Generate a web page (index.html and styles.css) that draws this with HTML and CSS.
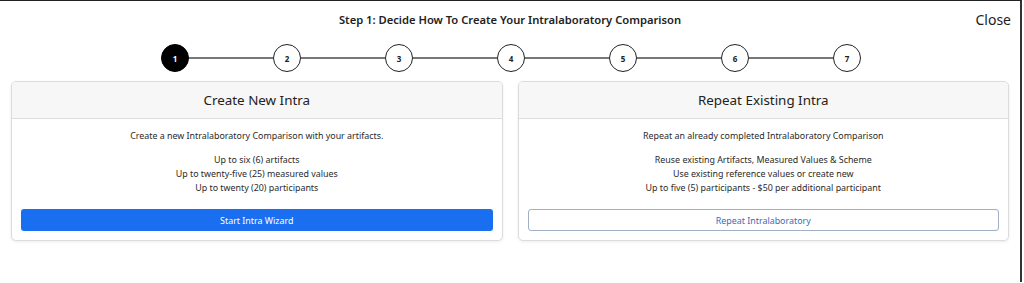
FILE: index.html
```html
<!DOCTYPE html>
<html>
<head>
<meta charset="utf-8">
<link rel="stylesheet" href="styles.css">
</head>
<body>
<div class="modal">
  <div class="head">
    <div class="title">Step 1: Decide How To Create Your Intralaboratory Comparison</div>
    <div class="close">Close</div>
  </div>
  <div class="stepper">
    <div class="step active">1</div><div class="line"></div>
    <div class="step">2</div><div class="line"></div>
    <div class="step">3</div><div class="line"></div>
    <div class="step">4</div><div class="line"></div>
    <div class="step">5</div><div class="line"></div>
    <div class="step">6</div><div class="line"></div>
    <div class="step">7</div>
  </div>
  <div class="cards">
    <div class="card">
      <div class="card-head">Create New Intra</div>
      <div class="card-body">
        <p class="lead">Create a new Intralaboratory Comparison with your artifacts.</p>
        <p class="list">Up to six (6) artifacts<br>Up to twenty-five (25) measured values<br>Up to twenty (20) participants</p>
        <div class="btn primary">Start Intra Wizard</div>
      </div>
    </div>
    <div class="card">
      <div class="card-head">Repeat Existing Intra</div>
      <div class="card-body">
        <p class="lead">Repeat an already completed Intralaboratory Comparison</p>
        <p class="list">Reuse existing Artifacts, Measured Values &amp; Scheme<br>Use existing reference values or create new<br>Up to five (5) participants - $50 per additional participant</p>
        <div class="btn outline">Repeat Intralaboratory</div>
      </div>
    </div>
  </div>
</div>
</body>
</html>
```
FILE: styles.css
```css
html, body { margin: 0; padding: 0; background: #fff; }
body { font-family: "Noto Sans", "Open Sans", sans-serif; color: #222; }
.modal {
  width: 1022px; height: 282px;
  border-top: 1px solid #222;
  border-right: 2px solid #333;
  box-sizing: border-box;
  position: relative;
}
.head { height: 36px; display: flex; align-items: center; justify-content: center; }
.title { font-size: 11.2px; font-weight: 600; color: #222; letter-spacing: 0; }
.close { position: absolute; right: 9px; top: 9px; font-size: 14px; color: #222; }
.stepper { display: flex; align-items: center; justify-content: center; height: 42px; margin-left: 2px; }
.step {
  width: 26px; height: 26px; border-radius: 50%;
  border: 1.5px solid #222; background: #fff;
  display: flex; align-items: center; justify-content: center;
  font-size: 8px; font-weight: 700; color: #222; flex: none;
}
.step.active { background: #000; color: #fff; border-color: #000; }
.line { width: 84px; height: 2px; background: #777; flex: none; }
.cards { display: flex; gap: 15px; padding: 2px 11px 0 11px; }
.card {
  flex: 1; border: 1px solid #dcdcdc; border-radius: 5px;
  box-shadow: 0 1px 3px rgba(0,0,0,0.08); overflow: hidden; background: #fff;
}
.card-head {
  height: 36px; background: #f7f7f7; border-bottom: 1px solid #dedede;
  display: flex; align-items: center; justify-content: center;
  font-size: 13.4px; color: #222;
}
.card-body { padding: 10px 9px 9px 9px; text-align: center; font-size: 8.9px; color: #2a2a2a; }
.lead { margin: 0 0 10px; line-height: 14px; }
.list { margin: 0 0 14px; line-height: 14px; }
.btn {
  height: 22px; border-radius: 3px; display: flex; align-items: center; justify-content: center;
  font-size: 8.9px; box-sizing: border-box;
}
.primary { background: #1a6ff0; color: #fff; }
.outline { border: 1px solid #9fb0c4; color: #3a6cb8; }
```
